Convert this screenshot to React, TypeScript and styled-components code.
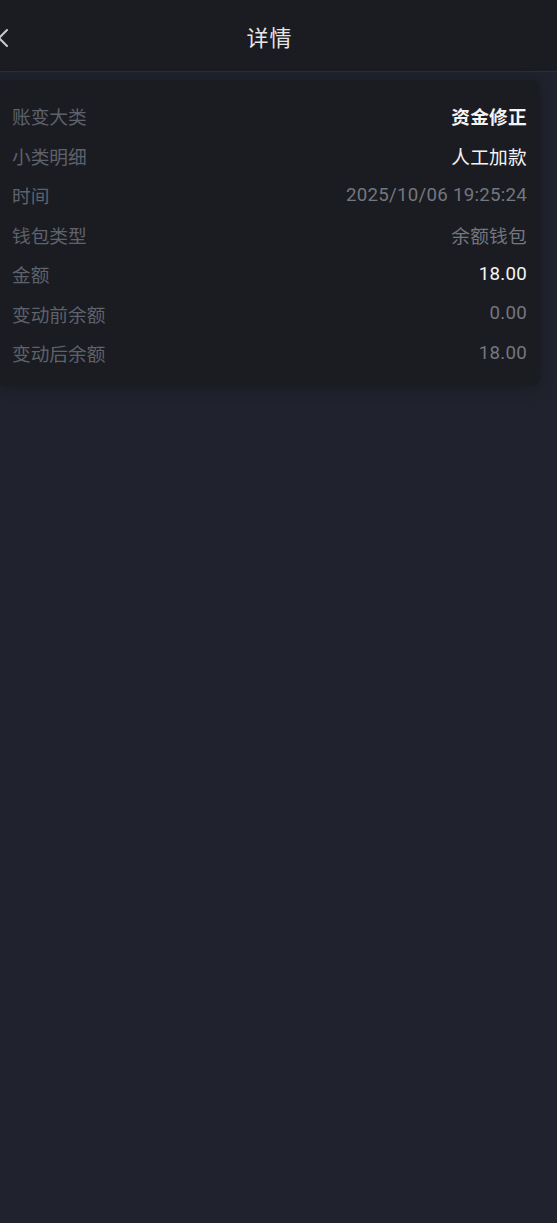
import React from 'react'
import styled, { createGlobalStyle } from 'styled-components'

const rows: { label: string; value: string; tone: 'strong' | 'bright' | 'muted' }[] = [
  { label: '账变大类', value: '资金修正', tone: 'strong' },
  { label: '小类明细', value: '人工加款', tone: 'bright' },
  { label: '时间', value: '2025/10/06 19:25:24', tone: 'muted' },
  { label: '钱包类型', value: '余额钱包', tone: 'muted' },
  { label: '金额', value: '18.00', tone: 'bright' },
  { label: '变动前余额', value: '0.00', tone: 'muted' },
  { label: '变动后余额', value: '18.00', tone: 'muted' },
]

const App = () => {
  return (
    <Page>
      <GlobalStyle />
      <Header>
        <Back>
          <svg width="12" height="20" viewBox="0 0 12 20">
            <path d="M10 2 L2 10 L10 18" fill="none" stroke="#c9cacf" strokeWidth="2" strokeLinecap="round" strokeLinejoin="round" />
          </svg>
        </Back>
        <Title>详情</Title>
        <span />
      </Header>

      <Card>
        {rows.map((r) => (
          <Row key={r.label}>
            <Label>{r.label}</Label>
            <Value tone={r.tone}>{r.value}</Value>
          </Row>
        ))}
      </Card>
    </Page>
  )
}

export default App

const GlobalStyle = createGlobalStyle`
body {
  margin: 0;
  background: #20232d;
  font-family: Roboto, "Noto Sans CJK SC", sans-serif;
}
`
const Page = styled.div`
min-height: 1223px;
background: #20232d;
overflow: hidden;
`
const Header = styled.div`
height: 71px;
background: #1b1c21;
border-bottom: 1px solid #2b2e3b;
display: grid;
grid-template-columns: 60px 1fr 78px;
align-items: center;
`
const Back = styled.div`
margin-left: -3px;
display: flex;
align-items: center;
padding-top: 4px;
`
const Title = styled.div`
text-align: center;
color: #e6e6e9;
font-size: 22px;
letter-spacing: 1px;
`
const Card = styled.div`
margin: 8px 17px 0 -3px;
padding: 16px 13px 12px 15px;
background: #1b1c21;
border-radius: 8px;
box-shadow: 0 2px 14px rgba(10, 11, 15, 0.35);
`
const Row = styled.div`
height: 39.5px;
display: flex;
align-items: center;
justify-content: space-between;
font-size: 18.7px;
`
const Label = styled.span`
color: #5e626c;
`
const Value = styled.span<{ tone: 'strong' | 'bright' | 'muted' }>`
color: ${(p) => (p.tone === 'muted' ? '#73777f' : '#f4f4f6')};
font-weight: ${(p) => (p.tone === 'strong' ? 700 : 400)};
letter-spacing: 0.25px;
`
